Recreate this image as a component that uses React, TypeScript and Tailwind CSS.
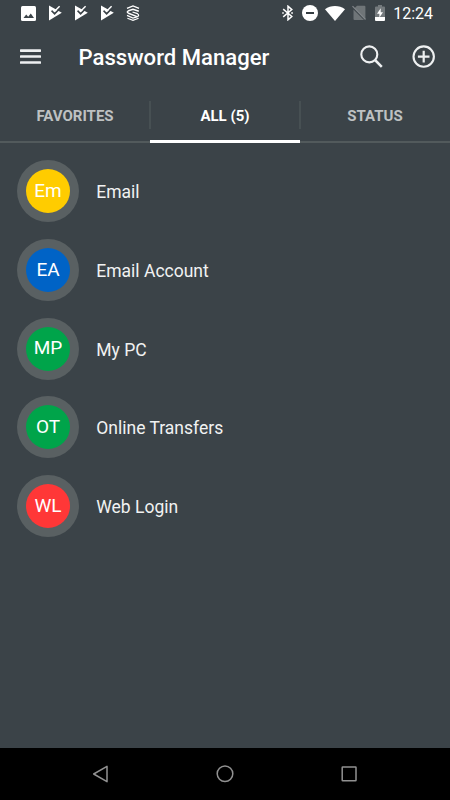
import { useState } from 'react';
import clsx from 'clsx';

const entries = [
  { initials: 'Em', name: 'Email', color: 'bg-[#ffcc00]' },
  { initials: 'EA', name: 'Email Account', color: 'bg-[#0063c6]' },
  { initials: 'MP', name: 'My PC', color: 'bg-[#00a44a]' },
  { initials: 'OT', name: 'Online Transfers', color: 'bg-[#00a44a]' },
  { initials: 'WL', name: 'Web Login', color: 'bg-[#ff3737]' },
];

const tabs = ['FAVORITES', `ALL (${entries.length})`, 'STATUS'];

function PlayCheckIcon() {
  return (
    <svg width="14" height="16" viewBox="0 0 14 16">
      <path d="M1 .6 13.8 7.8 1 15.6Z" fill="#fff" />
      <path d="m3.6 5.7 3 3 6.2-6.2" fill="none" stroke="#3b4348" strokeWidth="1.7" />
      <path d="m4.6 4.2 2 2L11.6 1.3" fill="none" stroke="#fff" strokeWidth="1.5" />
    </svg>
  );
}

function StatusBar() {
  return (
    <div className="flex h-[26px] shrink-0 items-center justify-between pl-[21px] pr-[17px]">
      <div className="flex items-center gap-3">
        <svg width="15" height="15" viewBox="0 0 15 15">
          <rect width="15" height="15" rx="1.5" fill="#fff" />
          <path d="m2.5 12 2.7-3.5 2 2.3L9.8 7.4l3.2 4.6Z" fill="#3b4348" />
        </svg>
        <PlayCheckIcon />
        <PlayCheckIcon />
        <PlayCheckIcon />
        <svg width="14" height="16" viewBox="0 0 14 16" fill="none" stroke="#fff" strokeWidth="1.4">
          <path d="M1 3.4 7 .9l6 2.5" />
          <path d="M12.8 6.2 7 4.2 2.5 5.8Q.2 7 2.5 8.2L11 11.6" strokeWidth="1.5" />
          <path d="m6.5 7 5 1.7q2.2 1.4 0 2.9L7 13 1 10.4" strokeWidth="1.3" />
          <path d="m1.4 13.2 5.6 2.1 5.6-2.1" strokeWidth="1.1" />
        </svg>
      </div>

      <div className="flex items-center">
        <svg className="mr-2" width="12" height="16" viewBox="0 0 12 16" fill="none" stroke="#fff" strokeWidth="1.5">
          <path d="m1.2 4.1 8.6 7.4L6 14.8V1.2l3.8 3.4-8.6 7.3" />
          <path d="M.2 8h1.6M9.2 8h1.7" strokeWidth="1.6" />
        </svg>
        <svg className="mr-[7px]" width="16" height="16" viewBox="0 0 16 16">
          <circle cx="8" cy="8" r="8" fill="#fff" />
          <path d="M4 8h8" stroke="#343c41" strokeWidth="2" />
        </svg>
        <svg className="mr-[7px]" width="20" height="15" viewBox="0 0 20 15">
          <path d="M0 3.2C5.7-1 14.3-1 20 3.2L10 15Z" fill="#fff" />
        </svg>
        <svg className="mr-[9px]" width="14" height="16" viewBox="0 0 14 16">
          <path d="M5 .8h7.4q1 0 1 1v12.4L2.5 3.2ZM1.5 4.5 12 15H2.5q-1 0-1-1Z" fill="#6f7578" />
          <path d="m.5 1.2 13 13.3" stroke="#81868a" strokeWidth="1.2" />
        </svg>
        <svg className="mr-2" width="10" height="16" viewBox="0 0 10 16">
          <path d="M3 0h4v1.5h2q1 0 1 1V12H0V2.5q0-1 1-1h2Z" fill="#747a7d" />
          <path d="M0 12h10v3q0 1-1 1H1q-1 0-1-1Z" fill="#fff" />
          <path d="M5.7 3.3 2 8.8h2.4v3.6L8 7.3H5.7Z" fill="#fff" />
        </svg>
        <span className="pt-0.5 text-[16px] leading-6">12:24</span>
      </div>
    </div>
  );
}

function Toolbar() {
  return (
    <header className="flex h-[62px] shrink-0 items-center pl-5 pr-[14px]">
      <svg width="21" height="16" viewBox="0 0 21 16" fill="#eef0f1">
        <rect width="21" height="2.6" y="0.3" rx="0.6" />
        <rect width="21" height="2.6" y="6.2" rx="0.6" />
        <rect width="21" height="2.6" y="12.2" rx="0.6" />
      </svg>
      <h1 className="ml-[37.6px] flex-1 text-[22.1px] font-medium leading-[60px]">Password Manager</h1>
      <svg className="mr-7" width="25" height="24" viewBox="0 0 25 24" fill="none" stroke="#eef0f1" strokeWidth="2.1">
        <circle cx="10.3" cy="9.4" r="8" />
        <path d="m16 15 6.8 6.8" strokeWidth="2.5" />
      </svg>
      <svg width="24" height="24" viewBox="0 0 24 24" fill="none" stroke="#eef0f1" strokeWidth="2.1">
        <circle cx="11.7" cy="11.6" r="10.2" />
        <path d="M11.7 5.8v11.6M5.9 11.6h11.6" strokeWidth="2.2" />
      </svg>
    </header>
  );
}

export default function App() {
  const [active, setActive] = useState(1);

  return (
    <div className="flex h-[800px] w-[450px] flex-col overflow-hidden bg-[#3b4348] font-['Roboto',sans-serif] text-white">
      <StatusBar />
      <Toolbar />

      {/* Tabs */}
      <nav className="flex h-[55px] shrink-0">
        {tabs.map((tab, i) => (
          <button
            key={tab}
            onClick={() => setActive(i)}
            className={clsx(
              'flex flex-1 flex-col text-[15px] font-bold',
              i === active ? 'text-white' : 'text-[#bec1c2]'
            )}
          >
            <span className="mt-[13px] flex h-7 w-full items-center">
              <span className={clsx('-ml-px h-full w-0.5', i > 0 && 'bg-[#475053]')} />
              <span className="-ml-px flex-1 pt-[3px]">{tab}</span>
            </span>
            <span className={clsx('mt-auto w-full', i === active ? 'h-[3px] bg-white' : 'h-0.5 bg-[#525a5c]')} />
          </button>
        ))}
      </nav>

      {/* Entries */}
      <ul className="flex-1 pt-[8.6px]">
        {entries.map((entry) => (
          <li key={entry.name} className="flex h-[78.8px] items-center pl-[17px]">
            <div className="flex size-[62px] items-center justify-center rounded-full bg-[#596062]">
              <div className={clsx('flex size-11 items-center justify-center rounded-full text-[19px]', entry.color)}>
                {entry.initials}
              </div>
            </div>
            <span className="ml-[17.3px] pt-[2.2px] text-[17.5px] text-[#f1f2f2]">{entry.name}</span>
          </li>
        ))}
      </ul>

      {/* System navigation */}
      <footer className="flex h-[52px] shrink-0 items-center justify-between bg-black px-[92px]">
        <svg width="18" height="18" viewBox="0 0 18 18" fill="none" stroke="#919191" strokeWidth="1.5" strokeLinejoin="round">
          <path d="M1.7 9 15 1.3v15.4Z" />
        </svg>
        <svg width="18" height="18" viewBox="0 0 18 18" fill="none" stroke="#919191" strokeWidth="1.5">
          <circle cx="9" cy="8.7" r="7.8" />
        </svg>
        <svg width="18" height="18" viewBox="0 0 18 18" fill="none" stroke="#919191" strokeWidth="1.5">
          <rect x="2.2" y="2" width="13.8" height="13.8" rx="0.5" />
        </svg>
      </footer>
    </div>
  );
}
